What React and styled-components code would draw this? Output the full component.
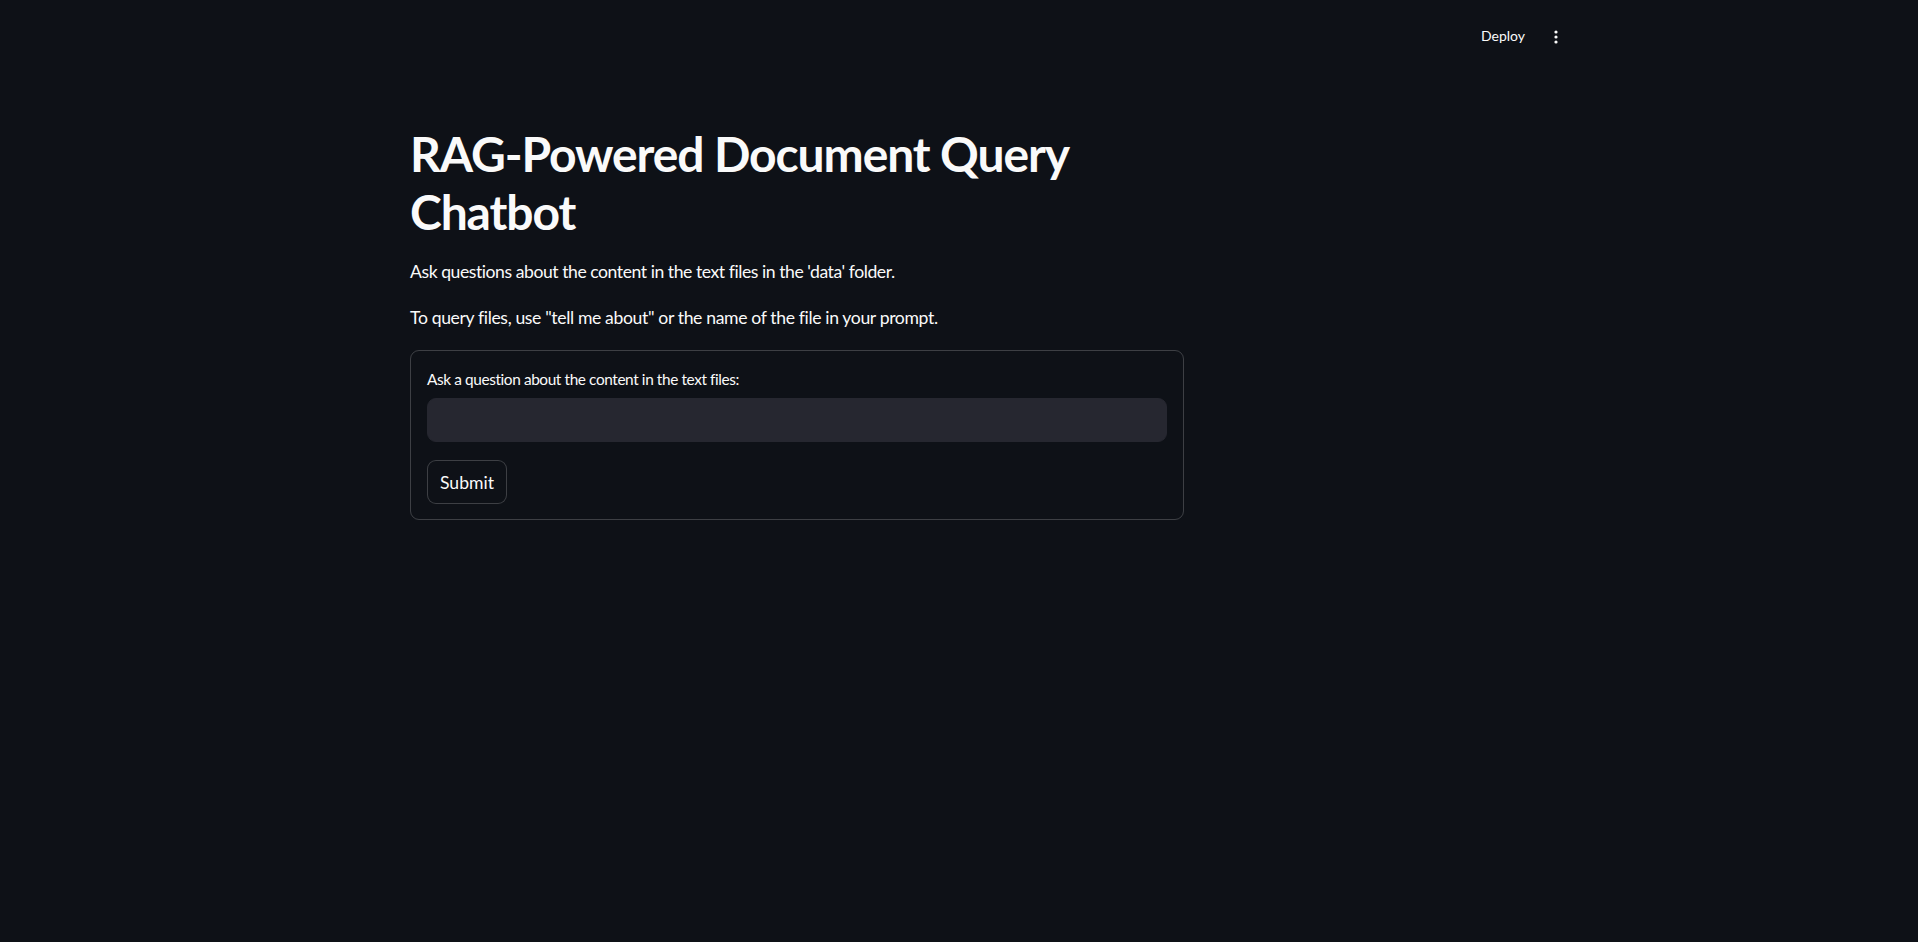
import React from "react";
import styled, { createGlobalStyle } from "styled-components";

const GlobalStyle = createGlobalStyle`
  html, body {
    margin: 0;
    padding: 0;
    background: #0e1117;
    color: #fafafa;
    font-family: Lato, "Liberation Sans", sans-serif;
  }
  * { box-sizing: border-box; }
`;

const AppShell = styled.div`
  width: 1594px;
  min-height: 942px;
  display: flex;
  flex-direction: column;
`;

const Header = styled.header`
  height: 66px;
  display: flex;
  align-items: flex-start;
  justify-content: flex-end;
  padding: 22px 28px 0 0;
  gap: 21px;
`;

const DeployButton = styled.button`
  background: transparent;
  border: none;
  color: #fafafa;
  font-family: Lato, "Liberation Sans", sans-serif;
  font-size: 14px;
  line-height: 28px;
  padding: 0;
  height: 28px;
  cursor: pointer;
`;

const MenuButton = styled.button`
  background: transparent;
  border: none;
  padding: 0;
  width: 20px;
  height: 30px;
  display: flex;
  align-items: center;
  justify-content: center;
  color: #fafafa;
`;

const Main = styled.main`
  width: 774px;
  margin: 0 auto;
  padding-top: 35px;
  display: flex;
  flex-direction: column;
`;

const Title = styled.h1`
  margin: 0;
  padding: 24px 0 17px;
  font-size: 48px;
  line-height: 58px;
  font-weight: 700;
  letter-spacing: -1.1px;
  color: #fafafa;
`;

const Paragraph = styled.p`
  margin: 0 0 18px;
  font-size: 17.6px;
  line-height: 28px;
  letter-spacing: ${(p) => p.$tracking || "-0.4px"};
  color: #fafafa;
`;

const Form = styled.form`
  margin-top: 0;
  border: 1px solid rgba(250, 250, 250, 0.2);
  border-radius: 9px;
  padding: 16px 16px 15px;
  display: flex;
  flex-direction: column;
`;

const Label = styled.label`
  font-size: 15.4px;
  line-height: 25px;
  margin-bottom: 6px;
  letter-spacing: -0.4px;
  color: #fafafa;
`;

const TextInput = styled.input`
  height: 44px;
  width: 100%;
  background: #262730;
  border: 1px solid #262730;
  border-radius: 9px;
  color: #fafafa;
  font-family: inherit;
  font-size: 17.6px;
  padding: 0 14px;
  outline: none;
`;

const SubmitButton = styled.button`
  margin-top: 18px;
  align-self: flex-start;
  height: 44px;
  padding: 0 12px;
  background: #0e1117;
  border: 1px solid rgba(250, 250, 250, 0.2);
  border-radius: 9px;
  color: #fafafa;
  font-family: inherit;
  font-size: 17.6px;
  cursor: pointer;
`;

export default function App() {
  return (
    <>
      <GlobalStyle />
      <AppShell>
        <Header>
          <DeployButton>Deploy</DeployButton>
          <MenuButton aria-label="Main menu">
            <svg width="4" height="14" viewBox="0 0 4 14">
              <circle cx="2" cy="2" r="1.6" fill="#fafafa" />
              <circle cx="2" cy="7" r="1.6" fill="#fafafa" />
              <circle cx="2" cy="12" r="1.6" fill="#fafafa" />
            </svg>
          </MenuButton>
        </Header>
        <Main>
          <Title>
            RAG-Powered Document Query
            <br />
            Chatbot
          </Title>
          <Paragraph $tracking="-0.45px">Ask questions about the content in the text files in the 'data' folder.</Paragraph>
          <Paragraph $tracking="-0.36px">To query files, use "tell me about" or the name of the file in your prompt.</Paragraph>
          <Form onSubmit={(e) => e.preventDefault()}>
            <Label htmlFor="q">Ask a question about the content in the text files:</Label>
            <TextInput id="q" type="text" />
            <SubmitButton type="submit">Submit</SubmitButton>
          </Form>
        </Main>
      </AppShell>
    </>
  );
}
